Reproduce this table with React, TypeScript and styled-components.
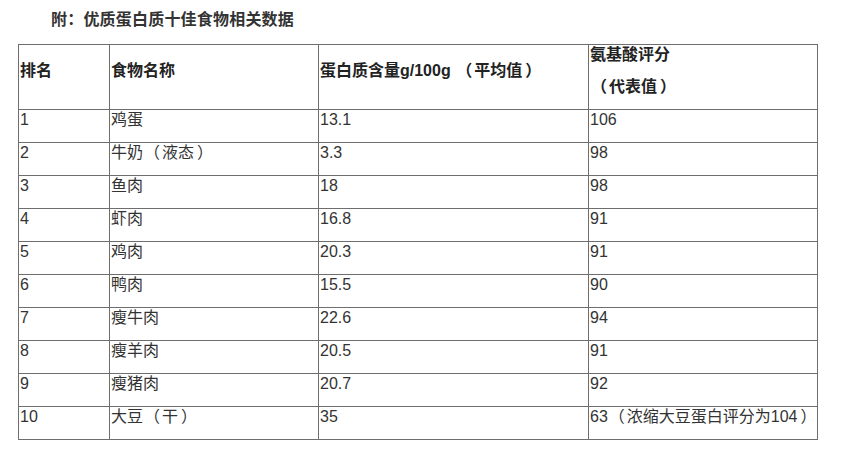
import React from "react";
import styled, { createGlobalStyle } from "styled-components";

const Global = createGlobalStyle`
  html, body { margin: 0; padding: 0; background: #ffffff; }
  body {
    font-family: "Liberation Sans", "Noto Sans CJK SC", sans-serif;
    color: #333;
  }
`;

const Page = styled.div`
  width: 848px;
  height: 453px;
  box-sizing: border-box;
  padding: 8px 0 0 18px;
  overflow: hidden;
`;

const Title = styled.h1`
  margin: 0 0 12px 33px;
  font-size: 16px;
  line-height: 24px;
  font-weight: bold;
  color: #333;
  letter-spacing: 0.2px;
`;

const Table = styled.table`
  border-collapse: separate;
  border-spacing: 0;
  border-right: 1px solid #6e6e6e;
  border-bottom: 1px solid #6e6e6e;
  font-size: 16px;
  line-height: 19px;
  table-layout: fixed;
`;

const HeadCell = styled.th<{ $w: number; $stack?: boolean }>`
  width: ${(p) => p.$w}px;
  height: ${(p) => (p.$stack ? "64px" : "48px")};
  box-sizing: content-box;
  padding: ${(p) => (p.$stack ? "0" : "16px")} 0 0 1px;
  border-left: 1px solid #6e6e6e;
  border-top: 1px solid #6e6e6e;
  vertical-align: top;
  text-align: left;
  font-weight: bold;
  color: #222;
  white-space: nowrap;
`;

const HeadLine = styled.span<{ $second?: boolean }>`
  display: block;
  margin-top: ${(p) => (p.$second ? "13px" : "0")};
`;

const Cell = styled.td`
  height: 32px;
  box-sizing: content-box;
  padding: 0 0 0 1px;
  border-left: 1px solid #6e6e6e;
  border-top: 1px solid #6e6e6e;
  vertical-align: top;
  color: #333;
  white-space: nowrap;
`;

const Paren = styled.span<{ $close?: boolean }>`
  margin: ${(p) => (p.$close ? "0 0 0 3px" : "0 2px 0 1px")};
`;

function Txt({ s }: { s: string }) {
  const parts = s.split(/([（）])/);
  return (
    <>
      {parts.map((p, i) =>
        p === "（" ? (
          <Paren key={i}>（</Paren>
        ) : p === "）" ? (
          <Paren key={i} $close>
            ）
          </Paren>
        ) : (
          <React.Fragment key={i}>{p}</React.Fragment>
        )
      )}
    </>
  );
}

const rows: [string, string, string, string][] = [
  ["1", "鸡蛋", "13.1", "106"],
  ["2", "牛奶（液态）", "3.3", "98"],
  ["3", "鱼肉", "18", "98"],
  ["4", "虾肉", "16.8", "91"],
  ["5", "鸡肉", "20.3", "91"],
  ["6", "鸭肉", "15.5", "90"],
  ["7", "瘦牛肉", "22.6", "94"],
  ["8", "瘦羊肉", "20.5", "91"],
  ["9", "瘦猪肉", "20.7", "92"],
  ["10", "大豆（干）", "35", "63（浓缩大豆蛋白评分为104）"],
];

export default function App() {
  return (
    <>
      <Global />
      <Page>
        <Title>附：优质蛋白质十佳食物相关数据</Title>
        <Table>
          <thead>
            <tr>
              <HeadCell $w={89}>排名</HeadCell>
              <HeadCell $w={207}>食物名称</HeadCell>
              <HeadCell $w={268}>
                <Txt s="蛋白质含量g/100g （平均值）" />
              </HeadCell>
              <HeadCell $w={226} $stack>
                <HeadLine>氨基酸评分</HeadLine>
                <HeadLine $second>
                  <Txt s="（代表值）" />
                </HeadLine>
              </HeadCell>
            </tr>
          </thead>
          <tbody>
            {rows.map((r) => (
              <tr key={r[0]}>
                {r.map((c, i) => (
                  <Cell key={i}>
                    <Txt s={c} />
                  </Cell>
                ))}
              </tr>
            ))}
          </tbody>
        </Table>
      </Page>
    </>
  );
}
